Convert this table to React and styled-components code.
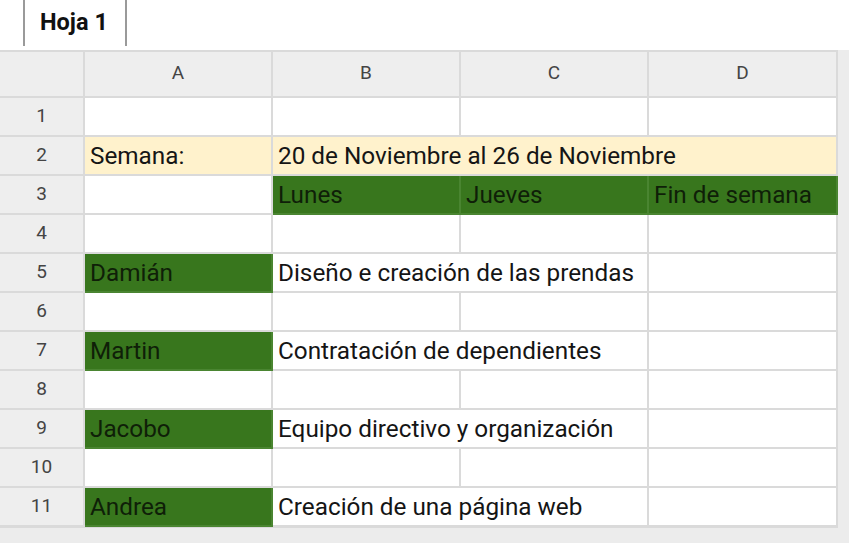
import React from "react"
import styled, { createGlobalStyle } from "styled-components"

const GlobalStyles = createGlobalStyle`
  html, body {
    margin: 0;
    padding: 0;
    background: #ffffff;
    font-family: Roboto, "Liberation Sans", sans-serif;
  }
`

const GREEN = "#38761d"
const YELLOW = "#fff2cc"
const LINE = "#dadada"

const columns = ["A", "B", "C", "D"]

const rows = [
  { n: 1, cells: [{}, {}, {}, {}] },
  {
    n: 2,
    cells: [
      { text: "Semana:", tone: "yellow" },
      { text: "20 de Noviembre al 26 de Noviembre", tone: "yellow", span: 3 },
    ],
  },
  {
    n: 3,
    cells: [
      {},
      { text: "Lunes", tone: "green" },
      { text: "Jueves", tone: "green" },
      { text: "Fin de semana", tone: "green" },
    ],
  },
  { n: 4, cells: [{}, {}, {}, {}] },
  {
    n: 5,
    cells: [
      { text: "Damián", tone: "green" },
      { text: "Diseño e creación de las prendas", span: 2 },
      {},
    ],
  },
  { n: 6, cells: [{}, {}, {}, {}] },
  {
    n: 7,
    cells: [
      { text: "Martin", tone: "green" },
      { text: "Contratación de dependientes", span: 2 },
      {},
    ],
  },
  { n: 8, cells: [{}, {}, {}, {}] },
  {
    n: 9,
    cells: [
      { text: "Jacobo", tone: "green" },
      { text: "Equipo directivo y organización", span: 2 },
      {},
    ],
  },
  { n: 10, cells: [{}, {}, {}, {}] },
  {
    n: 11,
    cells: [
      { text: "Andrea", tone: "green" },
      { text: "Creación de una página web", span: 2 },
      {},
    ],
  },
]

export default function App() {
  return (
    <Page>
      <GlobalStyles />
      <TabBar>
        <Tab>Hoja 1</Tab>
      </TabBar>
      <SheetArea>
        <Grid>
          <Corner />
          {columns.map((c) => (
            <ColHeader key={c}>{c}</ColHeader>
          ))}
          {rows.map((r) => (
            <React.Fragment key={r.n}>
              <RowHeader>{r.n}</RowHeader>
              {r.cells.map((cell, i) => (
                <Cell key={i} $tone={cell.tone} $span={cell.span || 1}>
                  {cell.text}
                </Cell>
              ))}
            </React.Fragment>
          ))}
        </Grid>
      </SheetArea>
    </Page>
  )
}

const Page = styled.div`
  width: 849px;
  height: 543px;
  display: flex;
  flex-direction: column;
  overflow: hidden;
`

const TabBar = styled.div`
  height: 50px;
  background: #ffffff;
  display: flex;
  align-items: flex-start;
  padding-left: 23px;
`

const Tab = styled.div`
  height: 46px;
  box-sizing: border-box;
  width: 104px;
  border-left: 2px solid #9a9a9a;
  border-right: 2px solid #9a9a9a;
  padding-left: 15px;
  display: flex;
  align-items: center;
  font-size: 23.5px;
  font-weight: 700;
  color: #111;
  padding-bottom: 2px;
`

const SheetArea = styled.div`
  flex: 1;
  background: #ececec;
`

const Grid = styled.div`
  display: grid;
  grid-template-columns: 85px 188px 188px 188px 189px;
  grid-template-rows: 46px repeat(11, 39px);
  width: 838px;
  box-sizing: border-box;
  border-top: 2px solid ${LINE};
  border-bottom: 1px solid ${LINE};
`

const Head = styled.div`
  box-sizing: border-box;
  background: #eeeeee;
  border-right: 2px solid ${LINE};
  border-bottom: 2px solid ${LINE};
  display: flex;
  align-items: center;
  justify-content: center;
  font-size: 19px;
  color: #444;
`

const Corner = styled(Head)``

const ColHeader = styled(Head)`
  padding-bottom: 3px;
`

const RowHeader = styled(Head)`
  padding-bottom: 2px;
`

const Cell = styled.div`
  grid-column: span ${(p) => p.$span};
  box-sizing: border-box;
  border-right: 2px solid ${LINE};
  border-bottom: 2px solid ${LINE};
  background: ${(p) =>
    p.$tone === "green" ? GREEN : p.$tone === "yellow" ? YELLOW : "#ffffff"};
  ${(p) =>
    p.$tone === "green" &&
    `border-color: #4a8531; color: #0f1f08;`}
  display: flex;
  align-items: center;
  padding-left: 5px;
  font-size: 24.3px;
  color: ${(p) => (p.$tone === "green" ? "#0f1f08" : "#151515")};
  white-space: nowrap;
  overflow: hidden;
`
